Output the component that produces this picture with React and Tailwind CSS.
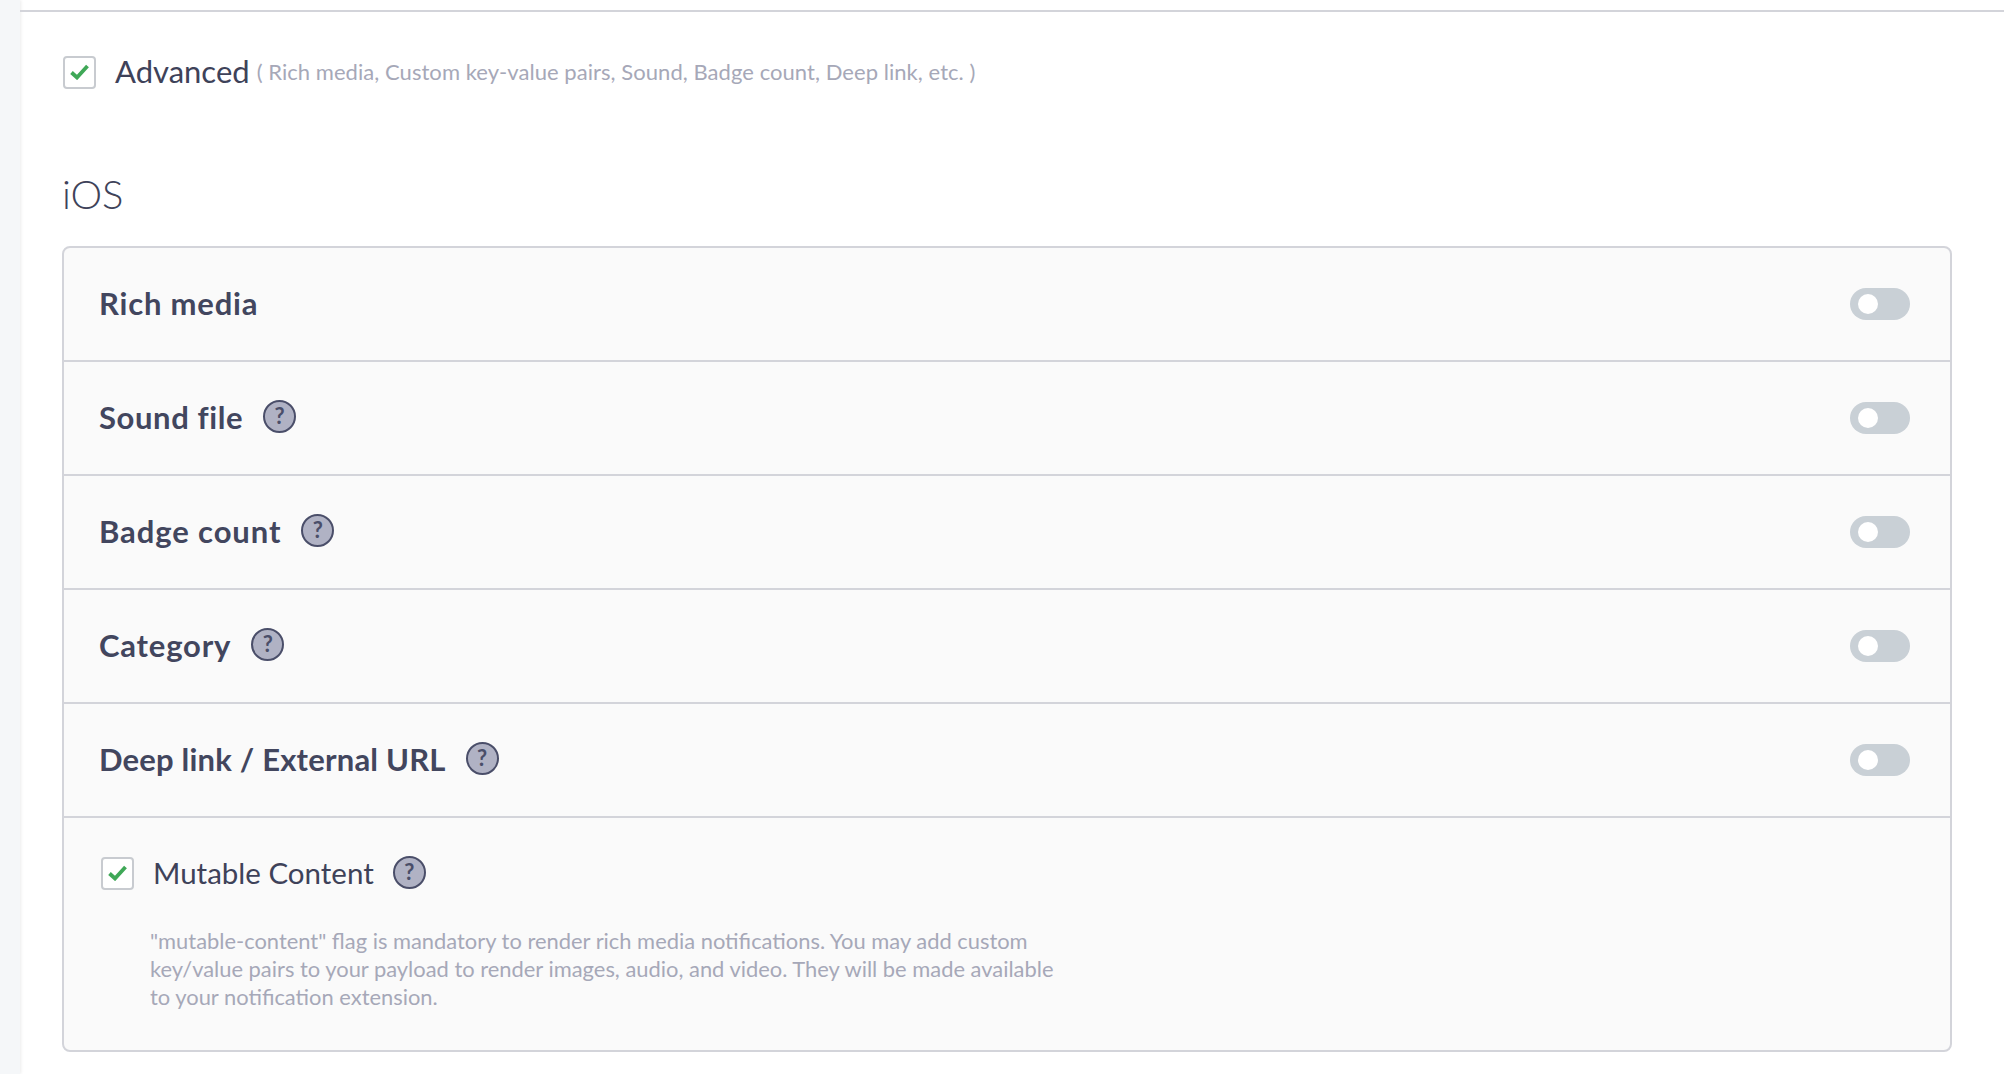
import React from 'react';

const HelpIcon = ({ lift = '-translate-y-px' }) => (
  <span className={`flex h-[33px] w-[33px] shrink-0 items-center justify-center rounded-full border-[2.5px] border-[#4a4e69] bg-[#b0b2c4] text-[22px] font-bold leading-none text-[#4a4e69] ${lift}`}>
    ?
  </span>
);

const Toggle = () => (
  <div className="flex h-8 w-[60px] items-center rounded-full bg-[#c9d0d6] pl-2">
    <div className="h-5 w-5 rounded-full bg-white" />
  </div>
);

const CheckBox = () => (
  <div className="flex h-[33px] w-[33px] shrink-0 items-center justify-center rounded-[4px] border-2 border-[#c8cbd0] bg-white">
    <svg className="h-[16px] w-[19px]" viewBox="0 0 19 16" fill="none">
      <path d="M1.5 8.5 L7 13.5 L17.5 2" stroke="#3fa857" strokeWidth="3.8" />
    </svg>
  </div>
);

const rows = [
  { label: 'Rich media', help: false, spacing: 'tracking-[0.8px]' },
  { label: 'Sound file', help: true, spacing: 'tracking-[0.6px]' },
  { label: 'Badge count', help: true, spacing: 'tracking-[0.9px]' },
  { label: 'Category', help: true, spacing: 'tracking-[0.8px]' },
  { label: 'Deep link / External URL', help: true, spacing: 'tracking-[0.2px]' },
];

const App = () => {
  return (
    <div className="h-[1074px] overflow-hidden bg-white font-['Lato',sans-serif] text-[#3e4259]">
      <div className="flex h-full">
        <div className="w-[20px] shrink-0 bg-[#f5f7f9] shadow-[1px_0_3px_rgba(0,0,0,0.08)]" />
        <div className="flex-1">
          <div className="mt-[10px] h-[2px] bg-[#d3d4da]" />
          <div className="pl-[42px] pr-[52px]">
            <div className="ml-[1px] mt-[43px] flex items-center">
              <CheckBox />
              <span className="ml-[19px] -translate-y-px text-[31px] leading-[34px]">Advanced</span>
              <span className="ml-[7px] text-[22px] leading-[34px] tracking-[0.05px] text-[#a6a8b8]">
                ( Rich media, Custom key-value pairs, Sound, Badge count, Deep link, etc. )
              </span>
            </div>
            <h2 className="mt-[80px] text-[40px] font-light leading-[50px]">iOS</h2>
            <div className="mt-[27px] rounded-[8px] border-2 border-[#d3d4da] bg-[#fafafa]">
              {rows.map((row) => (
                <div key={row.label} className="flex h-[114px] items-center justify-between border-b-2 border-[#d3d4da] pl-[35px] pr-[40px]">
                  <div className="flex items-center gap-5">
                    <span className={`-translate-y-px text-[31px] font-bold text-[#42465e] ${row.spacing}`}>{row.label}</span>
                    {row.help && <HelpIcon lift="-translate-y-[2px]" />}
                  </div>
                  <Toggle />
                </div>
              ))}
              <div className="h-[232px] pl-[37px] pt-[38px]">
                <div className="flex items-center">
                  <CheckBox />
                  <span className="ml-[19px] text-[29.5px] leading-[34px]">Mutable Content</span>
                  <span className="ml-[19px]"><HelpIcon /></span>
                </div>
                <p className="ml-[49px] mt-[37px] w-[925px] text-[21.9px] leading-[28px] text-[#a6a8b8]">
                  "mutable-content" flag is mandatory to render rich media notifications. You may add custom key/value pairs to your payload to render images, audio, and video. They will be made available to your notification extension.
                </p>
              </div>
            </div>
          </div>
        </div>
      </div>
    </div>
  );
};

export default App;
